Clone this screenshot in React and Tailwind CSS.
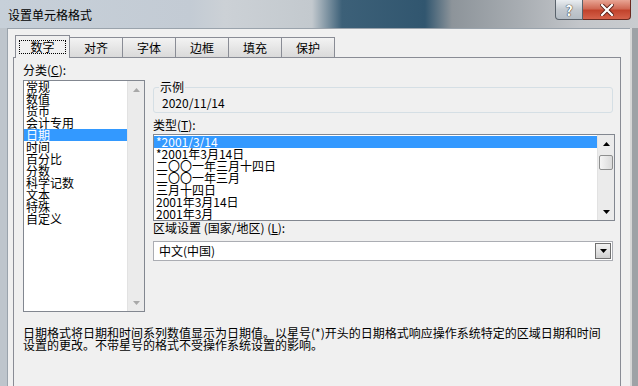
import React from "react";

const categories = ["常规", "数值", "货币", "会计专用", "日期", "时间", "百分比", "分数", "科学记数", "文本", "特殊", "自定义"];

const types = [
  "*2001/3/14",
  "*2001年3月14日",
  "二〇〇一年三月十四日",
  "二〇〇一年三月",
  "三月十四日",
  "2001年3月14日",
  "2001年3月",
];

const tabs = ["对齐", "字体", "边框", "填充", "保护"];

function Arrow({ dir, color }) {
  return (
    <svg width="7" height="4" viewBox="0 0 7 4">
      {dir === "up" ? <path d="M0 4 L3.5 0 L7 4Z" fill={color} /> : <path d="M0 0 L7 0 L3.5 4Z" fill={color} />}
    </svg>
  );
}

function VScroll({ thumb, disabled }) {
  const c = disabled ? "#a8a8a8" : "#000";
  return (
    <div className="w-[17px] flex flex-col bg-[#ebebeb] border-l border-[#e2e2e2]">
      <div className="h-[17px] flex items-center justify-center">
        <Arrow dir="up" color={c} />
      </div>
      {thumb && (
        <div className="mx-[1px] mt-[3px] h-[15px] rounded-[2px] border border-[#8e8f8f] bg-[linear-gradient(90deg,#f5f5f5,#dadada)]" />
      )}
      <div className="flex-1" />
      <div className="h-[17px] flex items-center justify-center">
        <Arrow dir="down" color={c} />
      </div>
    </div>
  );
}

export default function App() {
  return (
    <div className="w-[638px] h-[386px] overflow-hidden flex flex-col bg-[#bcc4cc] font-['Noto_Sans_CJK_SC','Noto_Sans',sans-serif] text-[12px] leading-[12px] text-black">
      {/* title bar */}
      <div className="h-[28px] shrink-0 flex bg-[linear-gradient(90deg,#c7d0d9_0px,#c3cbd4_190px,#ccd1d6_225px,#c3c9ce_312px,#3c6078_342px,#31566f_425px,#8d949a_452px,#a8adb2_520px,#c3c6ca_580px,#c9cccf_638px)]">
        <span className="pl-[8px] pt-[9px]">设置单元格格式</span>
        <div className="ml-auto mr-[7px] flex h-[20px]">
          <div className="w-[28px] h-[20px] flex items-center justify-center border border-t-0 border-[#59626b] rounded-bl-[4px] bg-[linear-gradient(180deg,#e9edf1,#c3c9cf_50%,#b4bcc4)] text-white font-bold text-[14px] [text-shadow:0_0_1px_#222,0_0_1px_#222]">
            ?
          </div>
          <div className="w-[48px] h-[20px] flex items-center justify-center border border-t-0 border-l-0 border-[#6b2a20] rounded-br-[4px] bg-[linear-gradient(180deg,#e8a594,#d06a55_45%,#c2432c_55%,#d5624b)]">
            <svg width="14" height="12" viewBox="0 0 14 12">
              <path d="M2 1 L12 11 M12 1 L2 11" stroke="#5a2018" strokeWidth="4" strokeLinecap="square" />
              <path d="M2 1 L12 11 M12 1 L2 11" stroke="#fff" strokeWidth="2.2" strokeLinecap="square" />
            </svg>
          </div>
        </div>
      </div>

      {/* body */}
      <div className="flex h-[380px] shrink-0">
        <div className="w-[7px] bg-[#bec5cc]" />
        <div className="flex-1 flex flex-col bg-[#f0f0f0] border-t border-l border-[#9aa3ac]">
          {/* tabs */}
          <div className="relative z-10 mt-[6px] ml-[7px] h-[23px] -mb-[1px] flex items-end">
            <div className="w-[55px] h-[23px] flex items-center justify-center border border-b-0 border-[#898c95] bg-[#f0f0f0]">
              <span className="px-[10px] border border-dotted border-black">数字</span>
            </div>
            {tabs.map((t) => (
              <div
                key={t}
                className="w-[53px] h-[20px] mb-[1px] flex items-center justify-center border-t border-r border-[#898c95] bg-[linear-gradient(180deg,#f3f3f3,#e6e6e6_50%,#dadada)]"
              >
                {t}
              </div>
            ))}
          </div>

          {/* panel */}
          <div className="flex-1 ml-[5px] mr-[9px] border border-[#898c95] bg-[#f0f0f0] pt-[6px] pl-[9px] flex flex-col">
            <div className="flex">
              {/* categories */}
              <div className="w-[122px] flex flex-col">
                <span>
                  分类(<u>C</u>):
                </span>
                <div className="mt-[4px] h-[232px] flex border border-[#828790] bg-white">
                  <div className="flex-1 flex flex-col">
                    {categories.map((c) => (
                      <div key={c} className={`h-[12px] pl-[2px] ${c === "日期" ? "bg-[#3399ff] text-white" : ""}`}>
                        {c}
                      </div>
                    ))}
                  </div>
                  <VScroll disabled />
                </div>
              </div>

              {/* right column */}
              <div className="ml-[8px] w-[462px] flex flex-col">
                <fieldset className="mt-[17px] w-[460px] border border-[#d5dfe5] rounded-[3px] pl-[8px] pb-[3px]">
                  <legend className="ml-[-3px] px-[1px]">示例</legend>
                  <div className="mt-[4px]">2020/11/14</div>
                </fieldset>

                <span className="mt-[6px]">
                  类型(<u>T</u>):
                </span>
                <div className="mt-[3px] h-[87px] flex border border-[#828790] bg-white">
                  <div className="flex-1 flex flex-col pt-[1px]">
                    {types.map((t, i) => (
                      <div key={t} className={`h-[12px] pl-[2px] ${i === 0 ? "bg-[#3399ff] text-white" : ""}`}>
                        {t}
                      </div>
                    ))}
                  </div>
                  <VScroll thumb />
                </div>

                <span className="mt-[1px]">
                  区域设置 (国家/地区) (<u>L</u>):
                </span>
                <div className="mt-[7px] w-[460px] h-[20px] flex items-center border border-[#abadb3] bg-white pl-[5px] pr-[1px]">
                  <span className="flex-1">中文(中国)</span>
                  <div className="w-[16px] h-[16px] flex items-center justify-center border border-[#707070] bg-[linear-gradient(180deg,#f2f2f2,#e2e2e2_50%,#d0d0d0)]">
                    <Arrow dir="down" color="#000" />
                  </div>
                </div>
              </div>
            </div>

            <div className="mt-[15px] whitespace-nowrap">
              日期格式将日期和时间系列数值显示为日期值。以星号(*)开头的日期格式响应操作系统特定的区域日期和时间
              <br />
              设置的更改。不带星号的格式不受操作系统设置的影响。
            </div>
          </div>
        </div>
        <div className="w-[8px] bg-[#9ea2a6] border-l-2 border-[#d6d6d6]" />
      </div>
    </div>
  );
}
